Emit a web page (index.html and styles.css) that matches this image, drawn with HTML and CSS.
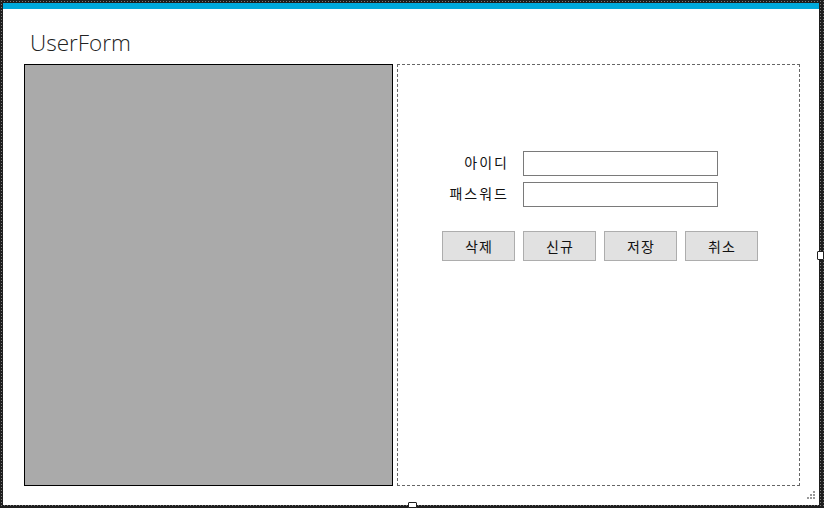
FILE: index.html
```html
<!DOCTYPE html>
<html lang="ko">
<head>
    <meta charset="UTF-8">
    <meta name="viewport" content="width=device-width, initial-scale=1.0">
    <title>UserForm</title>
    <link rel="stylesheet" href="styles.css">
</head>
<body>
    <div class="designer">
        <div class="form">
            <div class="form-title">UserForm</div>

            <div class="form-body">
                <!-- 왼쪽 목록 영역 -->
                <div class="list-panel"></div>

                <!-- 오른쪽 입력 영역 -->
                <div class="edit-panel">
                    <div class="fields">
                        <label class="field-label" for="userId">아이디</label>
                        <input id="userId" class="field-input" type="text">
                        <label class="field-label" for="userPw">패스워드</label>
                        <input id="userPw" class="field-input" type="password">
                    </div>
                    <div class="button-row">
                        <button class="btn">삭제</button>
                        <button class="btn">신규</button>
                        <button class="btn">저장</button>
                        <button class="btn">취소</button>
                    </div>
                </div>
            </div>

            <div class="grip"></div>
        </div>

        <div class="handle handle-right"></div>
        <div class="handle handle-bottom"></div>
    </div>
</body>
</html>
```

FILE: styles.css
```css
body {
    margin: 0;
    background: #1e1e1e;
    font-family: 'Noto Sans CJK KR', 'Noto Sans', sans-serif;
}

.designer {
    position: relative;
    width: 824px;
    height: 508px;
    box-sizing: border-box;
    padding: 3px 5px 3px 3px;
    background-color: #1e1e1e;
    background-image: radial-gradient(circle, #7a7a7a 0.7px, transparent 0.9px);
    background-size: 3px 3px;
}

.form {
    position: relative;
    height: 100%;
    box-sizing: border-box;
    background: white;
    border-top: 6px solid #00a9dc;
}

.form-title {
    font-family: 'Open Sans', 'Noto Sans', sans-serif;
    font-weight: 300;
    font-size: 22.5px;
    color: #222;
    padding: 20px 0 0 27px;
    height: 35px;
    line-height: 27px;
}

.form-body {
    display: flex;
    gap: 4px;
    padding-left: 21px;
}

.list-panel {
    width: 367px;
    height: 420px;
    background: #aaaaaa;
    border: 1px solid #000;
}

.edit-panel {
    border: 1px dashed #666;
    padding: 86px 0 0 44px;
    height: 334px;
    width: 357px;
}

.fields {
    display: grid;
    grid-template-columns: 65px 195px;
    column-gap: 16px;
    row-gap: 6px;
    align-items: center;
}

.field-label {
    text-align: right;
    font-size: 14px;
    letter-spacing: 2px;
    margin-right: -2px;
    color: #111;
    position: relative;
    top: -2px;
}

.field-input {
    height: 25px;
    box-sizing: border-box;
    margin: 0;
    border: 1px solid #7a7a7a;
    background: white;
    padding: 0 4px;
}

.button-row {
    display: flex;
    gap: 8px;
    margin-top: 24px;
}

.btn {
    width: 73px;
    height: 30px;
    margin: 0;
    padding: 0 0 0 1px;
    background: #e1e1e1;
    border: 1px solid #adadad;
    font-family: 'Noto Sans CJK KR', sans-serif;
    font-size: 14px;
    letter-spacing: 1px;
    color: #111;
}

.grip {
    position: absolute;
    right: 4px;
    bottom: 5px;
    width: 9px;
    height: 9px;
    background:
        linear-gradient(#999, #999) 7px 0 / 2px 2px no-repeat,
        linear-gradient(#999, #999) 4px 3px / 2px 2px no-repeat,
        linear-gradient(#999, #999) 7px 3px / 2px 2px no-repeat,
        linear-gradient(#999, #999) 1px 6px / 2px 2px no-repeat,
        linear-gradient(#999, #999) 4px 6px / 2px 2px no-repeat,
        linear-gradient(#999, #999) 7px 6px / 2px 2px no-repeat;
}

.handle {
    position: absolute;
    background: white;
    border: 1px solid #1e1e1e;
    border-radius: 1px;
}

.handle-right {
    right: 0;
    top: 251px;
    width: 5px;
    height: 7px;
}

.handle-bottom {
    left: 408px;
    bottom: 0;
    width: 7px;
    height: 4px;
}
```
